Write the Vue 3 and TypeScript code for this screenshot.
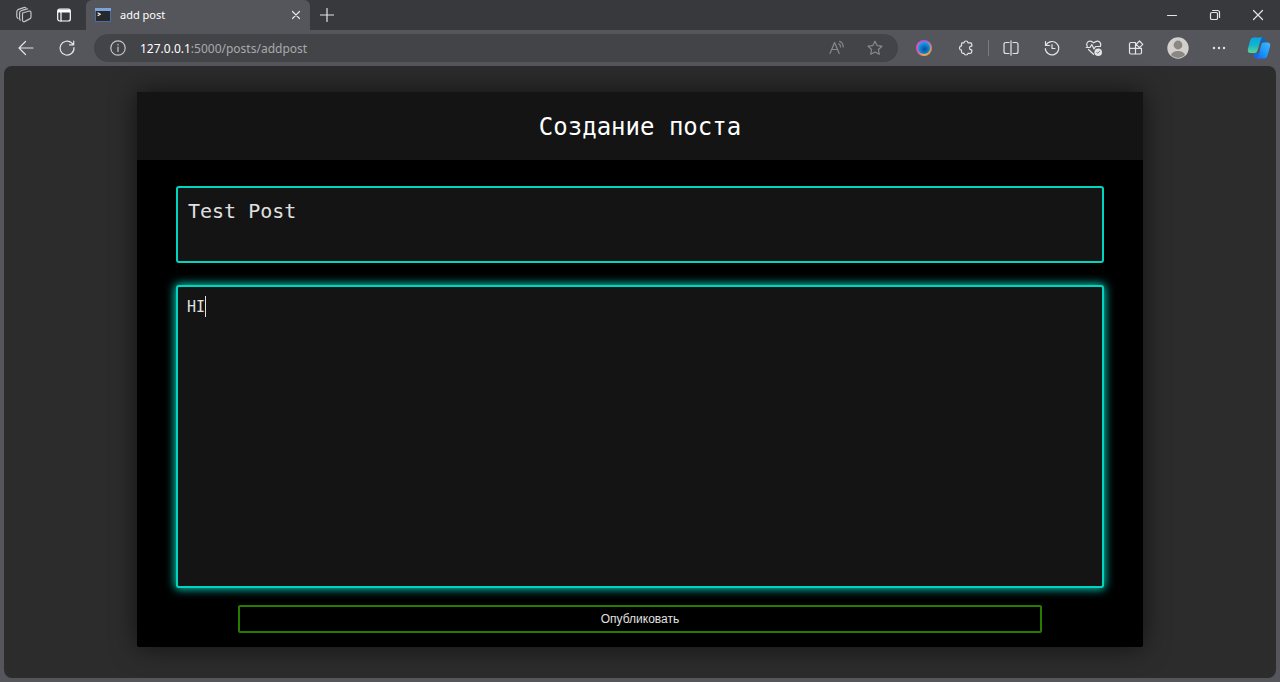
<script setup lang="ts">
import { ref } from 'vue'

const title = ref('Test Post')
const body = ref('HI')
const host = '127.0.0.1'
const path = ':5000/posts/addpost'
</script>

<template>
  <div class="browser">
    <header class="tabstrip">
      <button class="icon workspaces" aria-label="Workspaces">
        <svg width="18" height="18" viewBox="0 0 18 18">
          <path d="M7.500 7 13.500 5.200Q16 4.600 16 6.800V11Q16 12.300 14.700 12.900L10 15.400Q7.500 16.400 7.500 14ZM5.300 14.200Q4.600 13.600 4.600 12.500V7Q4.600 5.300 6.200 4.700L12.600 2.800M3 12.400Q1.800 11.700 1.800 10.300V6Q1.800 4 3.500 3.400L8.800 1.600Q10 1.200 10.700 1.800" />
        </svg>
      </button>
      <button class="icon tabmenu" aria-label="Tab actions">
        <svg width="16" height="16" viewBox="0 0 16 16">
          <rect x="1.700" y="2" width="12.600" height="12" rx="2" />
          <path class="solid" d="M2 2.500h12V5.500H2z" />
          <path d="M5 5v9" />
        </svg>
      </button>
      <div class="tab">
        <svg class="favicon" width="16" height="14" viewBox="0 0 16 14">
          <rect x="0" y="0" width="16" height="14" rx="1" fill="#4a6fa5" />
          <rect x="0" y="0" width="16" height="3" fill="#7aa3dc" />
          <rect x="1" y="3" width="14" height="10" fill="#26282c" />
          <path d="M3 5 5.400 6.300 3 7.500" fill="none" stroke="#eee" stroke-width="1.200" />
        </svg>
        <span class="tabname">add post</span>
        <button class="icon" aria-label="Close tab">
          <svg width="10" height="10" viewBox="0 0 10 10"><path d="m1.500 1.500 7 7M8.500 1.500l-7 7" /></svg>
        </button>
      </div>
      <button class="icon newtab" aria-label="New tab">
        <svg width="14" height="14" viewBox="0 0 14 14"><path d="M7 .5v13M.5 7h13" /></svg>
      </button>
      <div class="window-controls">
        <button class="icon" aria-label="Minimize">
          <svg width="12" height="12" viewBox="0 0 12 12"><path d="M1.500 6.500h9" /></svg>
        </button>
        <button class="icon" aria-label="Restore">
          <svg width="12" height="12" viewBox="0 0 12 12">
            <rect x="1.500" y="3.500" width="7" height="7" rx="1.300" />
            <path d="M3.600 1.500H8.500Q10.500 1.500 10.500 3.500V8.400" />
          </svg>
        </button>
        <button class="icon" aria-label="Close">
          <svg width="12" height="12" viewBox="0 0 12 12"><path d="m1.500 1.500 9 9M10.500 1.500l-9 9" /></svg>
        </button>
      </div>
    </header>

    <nav class="toolbar">
      <button class="icon" aria-label="Back">
        <svg width="18" height="16" viewBox="0 0 18 16"><path d="M16 8H2M8.500 1.500 2 8l6.500 6.500" /></svg>
      </button>
      <button class="icon" aria-label="Refresh">
        <svg width="18" height="18" viewBox="0 0 18 18"><path d="M16 8.500A7 7 0 1 1 13.800 4L15.500 5.500M15.700 2V5.800H11.500" /></svg>
      </button>
      <div class="address">
        <svg class="info" width="16" height="16" viewBox="0 0 16 16">
          <circle cx="8" cy="8" r="7.200" />
          <path d="M8 7v4.500M8 4.300v.6" />
        </svg>
        <span class="url"><b>{{ host }}</b>{{ path }}</span>
        <button class="icon dim" aria-label="Read aloud">
          <svg width="16" height="16" viewBox="0 0 16 16">
            <path d="M1 13.500 5.600 2.500 10.200 13.500M2.700 9.500H8.500M9.800 3.700Q11.600 4.800 11.500 7M10.600 1.300Q14.300 3 14.200 7" />
          </svg>
        </button>
        <button class="icon dim" aria-label="Add to favorites">
          <svg width="16" height="16" viewBox="0 0 16 16">
            <path d="m8 1.200 2.100 4.400 4.800.6-3.500 3.300.9 4.800L8 12l-4.300 2.300.9-4.800L1.100 6.200l4.800-.6Z" />
          </svg>
        </button>
      </div>
      <div class="extensions">
        <button class="icon" aria-label="Extension">
          <span class="orb"></span>
        </button>
        <button class="icon" aria-label="Extensions">
          <svg width="16" height="16" viewBox="0 0 16 16">
            <path d="M4 2.800H6Q6.200 1 8 1T10 2.800H12.300Q13.800 2.800 13.800 4.300V6.200H13.200Q11.500 6.400 11.500 8T13.200 9.900H13.800V11.800Q13.800 13.300 12.300 13.300H10Q9.800 15 8 15T6 13.300H5Q3.500 13.300 3.500 11.800V10.200Q1.500 10 1.500 8T3.500 5.800V3.800Z" />
          </svg>
        </button>
      </div>
      <span class="divider"></span>
      <div class="tools">
        <button class="icon" aria-label="Split screen">
          <svg width="16" height="16" viewBox="0 0 16 16">
            <path d="M6 2.500H3Q1 2.500 1 4.500V11.500Q1 13.500 3 13.500H6M10 2.500H13Q15 2.500 15 4.500V11.500Q15 13.500 13 13.500H10M8 .8V15.200" />
          </svg>
        </button>
        <button class="icon" aria-label="History">
          <svg width="16" height="16" viewBox="0 0 16 16">
            <path d="M2 5.200A6.700 6.700 0 1 1 1.300 8.500M1.500 1.500V5.500H5.500M8 4.500V8.500H11" />
          </svg>
        </button>
        <button class="icon" aria-label="Browser essentials">
          <svg width="18" height="18" viewBox="0 0 18 18">
            <path d="M2.300 7.500Q.8 4.500 3.200 2.600 6 1 8.700 3.900 11.700 1 14.400 2.700 16.600 4.500 15.300 7.500M1.200 8.500H5L6.800 5.500 9 10 10.500 7.500H15M3.500 10.500 8.500 15.300" />
            <circle class="solid" cx="13.200" cy="13.200" r="3.800" fill="#fff" />
            <path class="tick" d="m11.700 13.300 1 1 2-2.100" />
          </svg>
        </button>
        <button class="icon" aria-label="Apps">
          <svg width="16" height="16" viewBox="0 0 16 16">
            <path d="M7.500 2.500H3Q1.500 2.500 1.500 4V12.500Q1.500 14 3 14H12Q13.500 14 13.500 12.500V8.300H1.500M7.500 2.500V14M11.500 1 14.800 4.300 11.500 7.600 8.200 4.300Z" />
          </svg>
        </button>
      </div>
      <button class="icon profile" aria-label="Profile">
        <svg width="22" height="22" viewBox="0 0 22 22">
          <circle cx="11" cy="11" r="10.700" fill="#d2cfcc" stroke="none" />
          <circle cx="11" cy="8" r="4.400" fill="#8b8783" stroke="none" />
          <path d="M4 18Q5.500 14 11 14T18 18Q15 21 11 21T4 18Z" fill="#8b8783" stroke="none" />
        </svg>
      </button>
      <button class="icon more" aria-label="Settings and more">
        <svg width="14" height="4" viewBox="0 0 14 4">
          <g class="solid"><circle cx="2" cy="2" r="1.200" /><circle cx="7" cy="2" r="1.200" /><circle cx="12" cy="2" r="1.200" /></g>
        </svg>
      </button>
      <button class="icon copilot" aria-label="Copilot">
        <svg width="24" height="22" viewBox="0 0 24 22">
          <defs>
            <linearGradient id="leaf" x1="0" y1="0" x2="0" y2="1">
              <stop offset="0" stop-color="#0aa4e5" /><stop offset=".5" stop-color="#14b5cb" /><stop offset="1" stop-color="#61d391" />
            </linearGradient>
            <linearGradient id="wing" x1="0" y1="1" x2="1" y2="0">
              <stop offset="0" stop-color="#1762ef" /><stop offset=".5" stop-color="#1b9bfa" /><stop offset="1" stop-color="#48b7fa" />
            </linearGradient>
          </defs>
          <path d="M11.500 .5H15.500Q17.500.5 18.300 3L19 5.500H12Z" fill="#1262bb" stroke="none" />
          <path d="M12 16H6L7 19.500Q7.700 21.500 10 21.500H14Z" fill="#1769e2" stroke="none" />
          <path d="M6.500 .5H15.500Q14 1 13.300 4L10.500 13.500Q9.800 16 7.500 16H3.500Q0 16 1 11.500L3 4Q4 .5 6.500.5Z" fill="url(#leaf)" stroke="none" />
          <path d="M16.500 5.500H20.500Q24 5.500 23 9.500L20.700 18Q19.700 21.500 17 21.500H9Q11 21 11.700 18L14 8.500Q14.700 5.500 16.500 5.500Z" fill="url(#wing)" stroke="none" />
        </svg>
      </button>
    </nav>

    <main class="viewport">
      <form class="card" @submit.prevent>
        <h1>Создание поста</h1>
        <div class="fields">
          <textarea v-model="title" class="field title" aria-label="Заголовок" spellcheck="false"></textarea>
          <div class="editor">
            <textarea v-model="body" class="field body" aria-label="Текст поста" spellcheck="false"></textarea>
            <span class="caret"></span>
          </div>
          <button class="publish" type="submit">Опубликовать</button>
        </div>
      </form>
    </main>
  </div>
</template>

<style>
body {
  margin: 0;
  background: #55565b;
}
</style>

<style scoped>
.browser {
  display: flex;
  flex-direction: column;
  box-sizing: border-box;
  min-height: 100vh;
  background: #55565b;
  font-family: "Noto Sans", "Open Sans", sans-serif;
  color: #fff;
}
.icon {
  display: flex;
  align-items: center;
  justify-content: center;
  flex: none;
  padding: 0;
  border: 0;
  background: none;
  color: #e4e4e6;
}
svg {
  flex: none;
  fill: none;
  stroke: currentColor;
  stroke-width: 1.2;
  stroke-linecap: round;
  stroke-linejoin: round;
}
.solid {
  fill: currentColor;
  stroke: none;
}
.tick {
  stroke: #77787c;
  stroke-width: 1;
}
.tabstrip {
  display: flex;
  align-items: center;
  height: 30px;
  background: #38393c;
}
.workspaces {
  width: 18px;
  margin-left: 15px;
  color: #c4c4c6;
}
.tabmenu {
  width: 16px;
  margin: 0 14px 0 23px;
  color: #fff;
}
.tab {
  display: flex;
  align-items: center;
  box-sizing: border-box;
  width: 224px;
  height: 30px;
  padding: 0 9px;
  border-radius: 6px 6px 0 0;
  background: #55565b;
}
.favicon {
  stroke: none;
}
.tabname {
  flex: 1;
  margin-left: 9px;
  font-size: 11px;
  line-height: 14px;
}
.newtab {
  margin-left: 10px;
}
.window-controls {
  display: flex;
  gap: 31px;
  margin-left: auto;
  padding-right: 16px;
  color: #fff;
}
.toolbar {
  display: flex;
  align-items: center;
  height: 36px;
  padding: 0 9px 0 17px;
}
.toolbar > .icon + .icon {
  margin-left: 23px;
}
.address {
  display: flex;
  align-items: center;
  flex: 1;
  box-sizing: border-box;
  height: 28px;
  margin-left: 18px;
  padding: 0 15px 0 16px;
  border-radius: 14px;
  background: #434448;
}
.info {
  color: #c5c5c8;
}
.url {
  flex: 1;
  margin-left: 14px;
  font-size: 12px;
  color: #a9a9ac;
}
.url b {
  font-weight: 400;
  color: #fff;
}
.dim {
  color: #88898d;
}
.dim + .dim {
  margin-left: 22px;
}
.extensions {
  display: flex;
  gap: 26px;
  margin: 0 14px 0 18px;
}
.orb {
  box-sizing: border-box;
  width: 16px;
  height: 16px;
  border-radius: 50%;
  border: 2px solid transparent;
  background:
    radial-gradient(circle at 55% 60%, #07559a 5%, #1597ea 65%, #3fb4f4) padding-box,
    conic-gradient(#925eea, #d19c55 33%, #efab58 50%, #d15ca5 66%, #e54dbc 85%, #925eea) border-box;
}
.divider {
  width: 1px;
  height: 16px;
  background: #7b7c80;
}
.tools {
  display: flex;
  gap: 25px;
  margin: 0 23px 0 14px;
}
.toolbar > .copilot.copilot {
  margin-left: 21px;
}
.viewport {
  flex: 1;
  box-sizing: border-box;
  margin: 0 4px 4px;
  padding: 26px 133px 31px;
  border-radius: 8px;
  background: #2c2c2c;
}
.card {
  border-radius: 2px;
  background: #000;
  box-shadow: 0 0 26px rgba(0, 0, 0, 0.6);
}
h1 {
  margin: 0;
  padding-top: 2px;
  border-radius: 2px 2px 0 0;
  background: #141414;
  font: 24px/66px "DejaVu Sans Mono", monospace;
  text-align: center;
}
.fields {
  display: flex;
  flex-direction: column;
  padding: 26px 39px 14px;
}
.field {
  display: block;
  box-sizing: border-box;
  width: 100%;
  margin: 0;
  padding: 10px;
  border: 2px solid #00d5c0;
  border-radius: 3px;
  outline: none;
  resize: none;
  overflow: hidden;
  background: #141414;
  color: #e0e0e0;
  font-family: "DejaVu Sans Mono", monospace;
}
.title {
  height: 77px;
  font-size: 20px;
  line-height: 26px;
}
.editor {
  position: relative;
  margin: 22px 0 17px;
}
.body {
  height: 303px;
  padding: 10px 9px;
  font-size: 15px;
  line-height: 20px;
  box-shadow: 0 0 10px 1px #00d5c0;
  caret-color: transparent;
}
.caret {
  position: absolute;
  top: 11px;
  left: 29px;
  width: 1px;
  height: 21px;
  background: #e0e0e0;
}
.publish {
  height: 28px;
  margin: 0 62px;
  padding: 0;
  border: 2px solid #267d00;
  border-radius: 2px;
  background: #000;
  color: #e0e0e0;
  font: 12px "Liberation Sans", Arial, sans-serif;
}
</style>
